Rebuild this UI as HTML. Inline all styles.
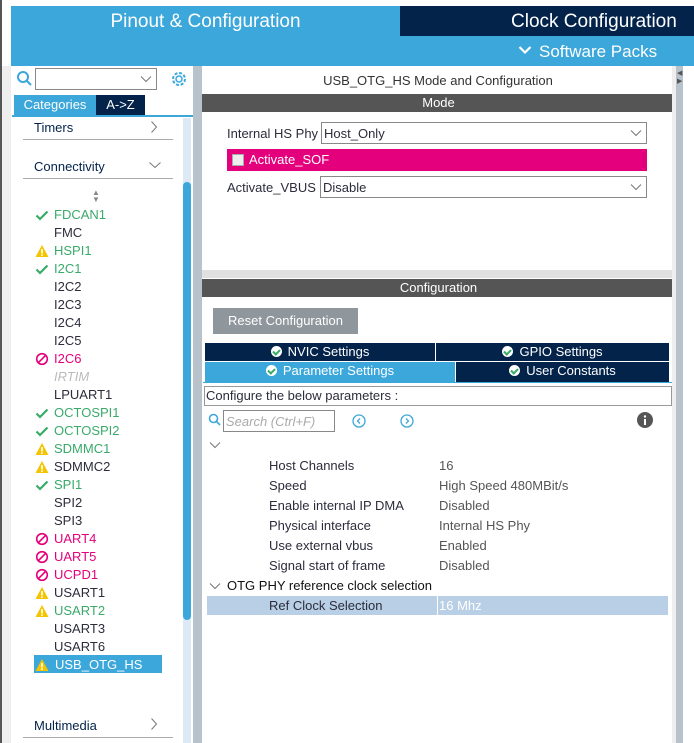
<!DOCTYPE html>
<html><head><meta charset="utf-8"><style>
*{margin:0;padding:0;box-sizing:border-box}
body{width:694px;height:743px;overflow:hidden;background:#fff;font-family:"Liberation Sans",sans-serif;position:relative;color:#2c2c3c}
.a{position:absolute}
.it{position:absolute;left:54px;font-size:13px;line-height:18px}
.ic{position:absolute;left:35px;width:14px;height:18px}
.g{color:#3aaa6a}.r{color:#e4007c}.k{color:#2c2c3c}
.lbl{position:absolute;left:269px;font-size:13px;color:#2c2c3c}
.val{position:absolute;left:439px;font-size:13px;color:#555}
.tab{position:absolute;height:18px;color:#fff;font-size:13px;text-align:center;line-height:18px}
.ck{display:inline-block;width:11px;height:11px;border-radius:50%;background:#fff;vertical-align:-1px;margin-right:6px;position:relative}
.ck:after{content:"";position:absolute;left:3px;top:2px;width:3px;height:5px;border:solid #3aaa6a;border-width:0 2px 2px 0;transform:rotate(45deg)}
</style></head><body>
<div class="a" style="left:0;top:0;width:2px;height:743px;background:#555"></div>
<div class="a" style="left:2px;top:66px;width:9px;height:677px;background:#eee"></div>
<!-- header -->
<div class="a" style="left:11px;top:6px;width:389px;height:60px;background:#3ba7db"></div>
<div class="a" style="left:11px;top:11px;width:389px;text-align:center;color:#fff;font-size:19px">Pinout &amp; Configuration</div>
<div class="a" style="left:400px;top:6px;width:294px;height:30px;background:#03234b"></div>
<div class="a" style="left:511px;top:11px;color:#fff;font-size:19px">Clock Configuration</div>
<div class="a" style="left:400px;top:36px;width:294px;height:30px;background:#3ba7db"></div>
<svg class="a" style="left:518px;top:45px" width="14" height="10"><path d="M1.5 2 7 7.5 12.5 2" fill="none" stroke="#fff" stroke-width="2.2"/></svg>
<div class="a" style="left:539px;top:42px;color:#fff;font-size:17px">Software Packs</div>
<!-- left panel -->
<svg class="a" style="left:16px;top:69px" width="18" height="20"><circle cx="7" cy="8" r="5" fill="none" stroke="#3ba7db" stroke-width="2"/><line x1="11" y1="12" x2="15" y2="16" stroke="#3ba7db" stroke-width="2"/></svg>
<div class="a" style="left:35px;top:68px;width:122px;height:22px;border:1px solid #888"></div>
<svg class="a" style="left:140px;top:75px" width="12" height="8"><path d="M1 1.5 6 6.5 11 1.5" fill="none" stroke="#777" stroke-width="1"/></svg>
<svg class="a" style="left:170px;top:70px" width="18" height="18"><circle cx="9" cy="9" r="6" fill="none" stroke="#3ba7db" stroke-width="2" stroke-dasharray="3 1.7"/><circle cx="9" cy="9" r="3" fill="none" stroke="#3ba7db" stroke-width="1.5"/></svg>
<div class="a" style="left:14px;top:95px;width:82px;height:20px;background:#3ba7db;color:#fff;font-size:13px;line-height:20px;text-align:center">Categories</div>
<div class="a" style="left:96px;top:95px;width:49px;height:20px;background:#03234b;color:#fff;font-size:13px;line-height:20px;text-align:center">A-&gt;Z</div>
<div class="a" style="left:12px;top:115px;width:181px;height:2px;background:#3ba7db"></div>
<div class="a" style="left:34px;top:120px;font-size:13px;color:#03234b">Timers</div>
<svg class="a" style="left:150px;top:120px" width="8" height="14"><path d="M1.5 1.5 6.5 7 1.5 12.5" fill="none" stroke="#777" stroke-width="1"/></svg>
<div class="a" style="left:23px;top:139px;width:150px;height:1px;background:#aaa"></div>
<div class="a" style="left:34px;top:159px;font-size:13px;color:#03234b">Connectivity</div>
<svg class="a" style="left:148px;top:161px" width="14" height="8"><path d="M1.5 1.5 7 6.5 12.5 1.5" fill="none" stroke="#777" stroke-width="1"/></svg>
<div class="a" style="left:23px;top:178px;width:150px;height:1px;background:#aaa"></div>
<div class="a" style="left:92px;top:189px;font-size:8px;color:#888;line-height:7px">▲<br>▼</div>
<div class="a" style="left:183px;top:118px;width:8px;height:625px;background:#dde9f5"></div>
<div class="a" style="left:183px;top:182px;width:8px;height:438px;background:#3ba7db;border-radius:4px"></div>
<div class="a" style="left:193px;top:66px;width:9px;height:677px;background:#b8c2ca"></div>

<div class="a" style="left:34px;top:655px;width:128px;height:18px;background:#3ba7db"></div>
<div id="list"></div>
<div class="a" style="left:34px;top:718px;font-size:13px;color:#03234b">Multimedia</div>
<svg class="a" style="left:150px;top:717px" width="8" height="14"><path d="M1.5 1.5 6.5 7 1.5 12.5" fill="none" stroke="#777" stroke-width="1"/></svg>
<div class="a" style="left:23px;top:737px;width:150px;height:1px;background:#aaa"></div>

<!-- right panel -->
<div class="a" style="left:202px;top:73px;width:472px;text-align:center;font-size:13px;color:#333">USB_OTG_HS Mode and Configuration</div>
<div class="a" style="left:202px;top:94px;width:473px;height:18px;background:#555;color:#fff;text-align:center;font-size:13px;line-height:18px">Mode</div>
<div class="a" style="left:227px;top:126px;font-size:13px">Internal HS Phy</div>
<div class="a" style="left:321px;top:122px;width:326px;height:22px;border:1px solid #888;font-size:13px;padding:3px 2px">Host_Only</div>
<svg class="a" style="left:630px;top:129px" width="12" height="8"><path d="M1 1.5 6 6.5 11 1.5" fill="none" stroke="#777" stroke-width="1"/></svg>
<div class="a" style="left:227px;top:149px;width:420px;height:22px;background:#e4007c;color:#fff;font-size:13px;line-height:22px;padding-left:22px">Activate_SOF</div>
<div class="a" style="left:232px;top:154px;width:12px;height:12px;background:#eee;border:1px solid #aaa"></div>
<div class="a" style="left:227px;top:180px;font-size:13px">Activate_VBUS</div>
<div class="a" style="left:320px;top:176px;width:327px;height:22px;border:1px solid #888;font-size:13px;padding:3px 2px">Disable</div>
<svg class="a" style="left:630px;top:183px" width="12" height="8"><path d="M1 1.5 6 6.5 11 1.5" fill="none" stroke="#777" stroke-width="1"/></svg>
<div class="a" style="left:202px;top:270px;width:473px;height:8px;background:#e0e0e0"></div>
<div class="a" style="left:202px;top:279px;width:473px;height:18px;background:#555;color:#fff;text-align:center;font-size:13px;line-height:18px">Configuration</div>
<div class="a" style="left:213px;top:308px;width:145px;height:26px;background:#8f969c;color:#fff;font-size:13px;line-height:26px;text-align:center">Reset Configuration</div>
<div class="tab" style="left:205px;top:343px;width:230px;background:#03234b"><span class="ck"></span>NVIC Settings</div>
<div class="tab" style="left:436px;top:343px;width:233px;background:#03234b"><span class="ck"></span>GPIO Settings</div>
<div class="tab" style="left:205px;top:362px;width:250px;background:#3ba7db;height:20px"><span class="ck"></span>Parameter Settings</div>
<div class="tab" style="left:456px;top:362px;width:213px;background:#03234b;height:20px"><span class="ck"></span>User Constants</div>
<div class="a" style="left:203px;top:382px;width:471px;height:1px;background:#3ba7db"></div>
<div class="a" style="left:204px;top:386px;width:468px;height:20px;border:1px solid #999;font-size:13px;line-height:18px;padding-left:1px">Configure the below parameters :</div>
<svg class="a" style="left:208px;top:413px" width="14" height="14"><circle cx="5.5" cy="5.5" r="4" fill="none" stroke="#3ba7db" stroke-width="1.6"/><line x1="8.5" y1="8.5" x2="12" y2="12" stroke="#3ba7db" stroke-width="1.6"/></svg>
<div class="a" style="left:223px;top:410px;width:112px;height:22px;border:1px solid #888;font-size:13px;color:#aaa;font-style:italic;padding:3px 2px">Search (Ctrl+F)</div>
<svg class="a" style="left:352px;top:414px" width="14" height="14"><circle cx="7" cy="7" r="6" fill="none" stroke="#3ba7db" stroke-width="1.3"/><path d="M8 4.5 5.5 7 8 9.5" fill="none" stroke="#3ba7db" stroke-width="1.3"/></svg>
<svg class="a" style="left:400px;top:414px" width="14" height="14"><circle cx="7" cy="7" r="6" fill="none" stroke="#3ba7db" stroke-width="1.3"/><path d="M6 4.5 8.5 7 6 9.5" fill="none" stroke="#3ba7db" stroke-width="1.3"/></svg>
<svg class="a" style="left:637px;top:412px" width="16" height="16"><circle cx="8" cy="8" r="8" fill="#555"/><rect x="7" y="7" width="2" height="6" fill="#fff"/><circle cx="8" cy="4.5" r="1.2" fill="#fff"/></svg>
<svg class="a" style="left:209px;top:441px" width="12" height="8"><path d="M1 1.5 6 6.5 11 1.5" fill="none" stroke="#777" stroke-width="1"/></svg>
<div class="lbl" style="top:458px">Host Channels</div><div class="val" style="top:458px">16</div>
<div class="lbl" style="top:478px">Speed</div><div class="val" style="top:478px">High Speed 480MBit/s</div>
<div class="lbl" style="top:498px">Enable internal IP DMA</div><div class="val" style="top:498px">Disabled</div>
<div class="lbl" style="top:518px">Physical interface</div><div class="val" style="top:518px">Internal HS Phy</div>
<div class="lbl" style="top:538px">Use external vbus</div><div class="val" style="top:538px">Enabled</div>
<div class="lbl" style="top:558px">Signal start of frame</div><div class="val" style="top:558px">Disabled</div>
<svg class="a" style="left:209px;top:582px" width="12" height="8"><path d="M1 1.5 6 6.5 11 1.5" fill="none" stroke="#777" stroke-width="1"/></svg>
<div class="a" style="left:227px;top:578px;font-size:13px;color:#111">OTG PHY reference clock selection</div>
<div class="a" style="left:207px;top:596px;width:230px;height:19px;background:#b8cfe5"></div>
<div class="a" style="left:438px;top:596px;width:230px;height:19px;background:#b8cfe5"></div>
<div class="lbl" style="top:598px">Ref Clock Selection</div><div class="val" style="top:598px;color:#fff">16 Mhz</div>
<div class="a" style="left:672px;top:66px;width:4px;height:677px;background:#eee"></div>
<div class="a" style="left:676px;top:66px;width:7px;height:677px;background:#b8c2ca"></div>
<div class="a" style="left:677px;top:70px;font-size:7px;color:#555;line-height:8px">◀<br>▶</div>
<script>
var items=[["FDCAN1","g","c"],["FMC","k",""],["HSPI1","g","w"],["I2C1","g","c"],["I2C2","k",""],["I2C3","k",""],["I2C4","k",""],["I2C5","k",""],["I2C6","r","n"],["IRTIM","i",""],["LPUART1","k",""],["OCTOSPI1","g","c"],["OCTOSPI2","g","c"],["SDMMC1","g","w"],["SDMMC2","k","w"],["SPI1","g","c"],["SPI2","k",""],["SPI3","k",""],["UART4","r","n"],["UART5","r","n"],["UCPD1","r","n"],["USART1","k","w"],["USART2","g","w"],["USART3","k",""],["USART6","k",""],["USB_OTG_HS","s","w"]];
var h="";items.forEach(function(t,i){var y=206+i*18;var st=t[1]=="i"?"color:#bbb;font-style:italic":t[1]=="s"?"color:#fff;left:55px":"";
h+='<div class="it '+t[1]+'" style="top:'+y+'px;'+st+'">'+t[0]+'</div>';
var ic="";if(t[2]=="c")ic='<svg width="14" height="18"><path d="M1.5 9.5 5 13 12.5 5.5" fill="none" stroke="#3aaa6a" stroke-width="2.2"/></svg>';
if(t[2]=="w")ic='<svg width="14" height="18"><path d="M7 3 13.5 15H.5Z" fill="#f5c400"/><rect x="6.2" y="7" width="1.6" height="4.5" fill="#fff"/><rect x="6.2" y="12.3" width="1.6" height="1.6" fill="#fff"/></svg>';
if(t[2]=="n")ic='<svg width="14" height="18"><circle cx="7" cy="9" r="5.3" fill="none" stroke="#e4007c" stroke-width="1.6"/><line x1="3.3" y1="12.7" x2="10.7" y2="5.3" stroke="#e4007c" stroke-width="1.6"/></svg>';
if(ic)h+='<div class="ic" style="top:'+y+'px">'+ic+'</div>';});
document.getElementById("list").innerHTML=h;
</script>
</body></html>
